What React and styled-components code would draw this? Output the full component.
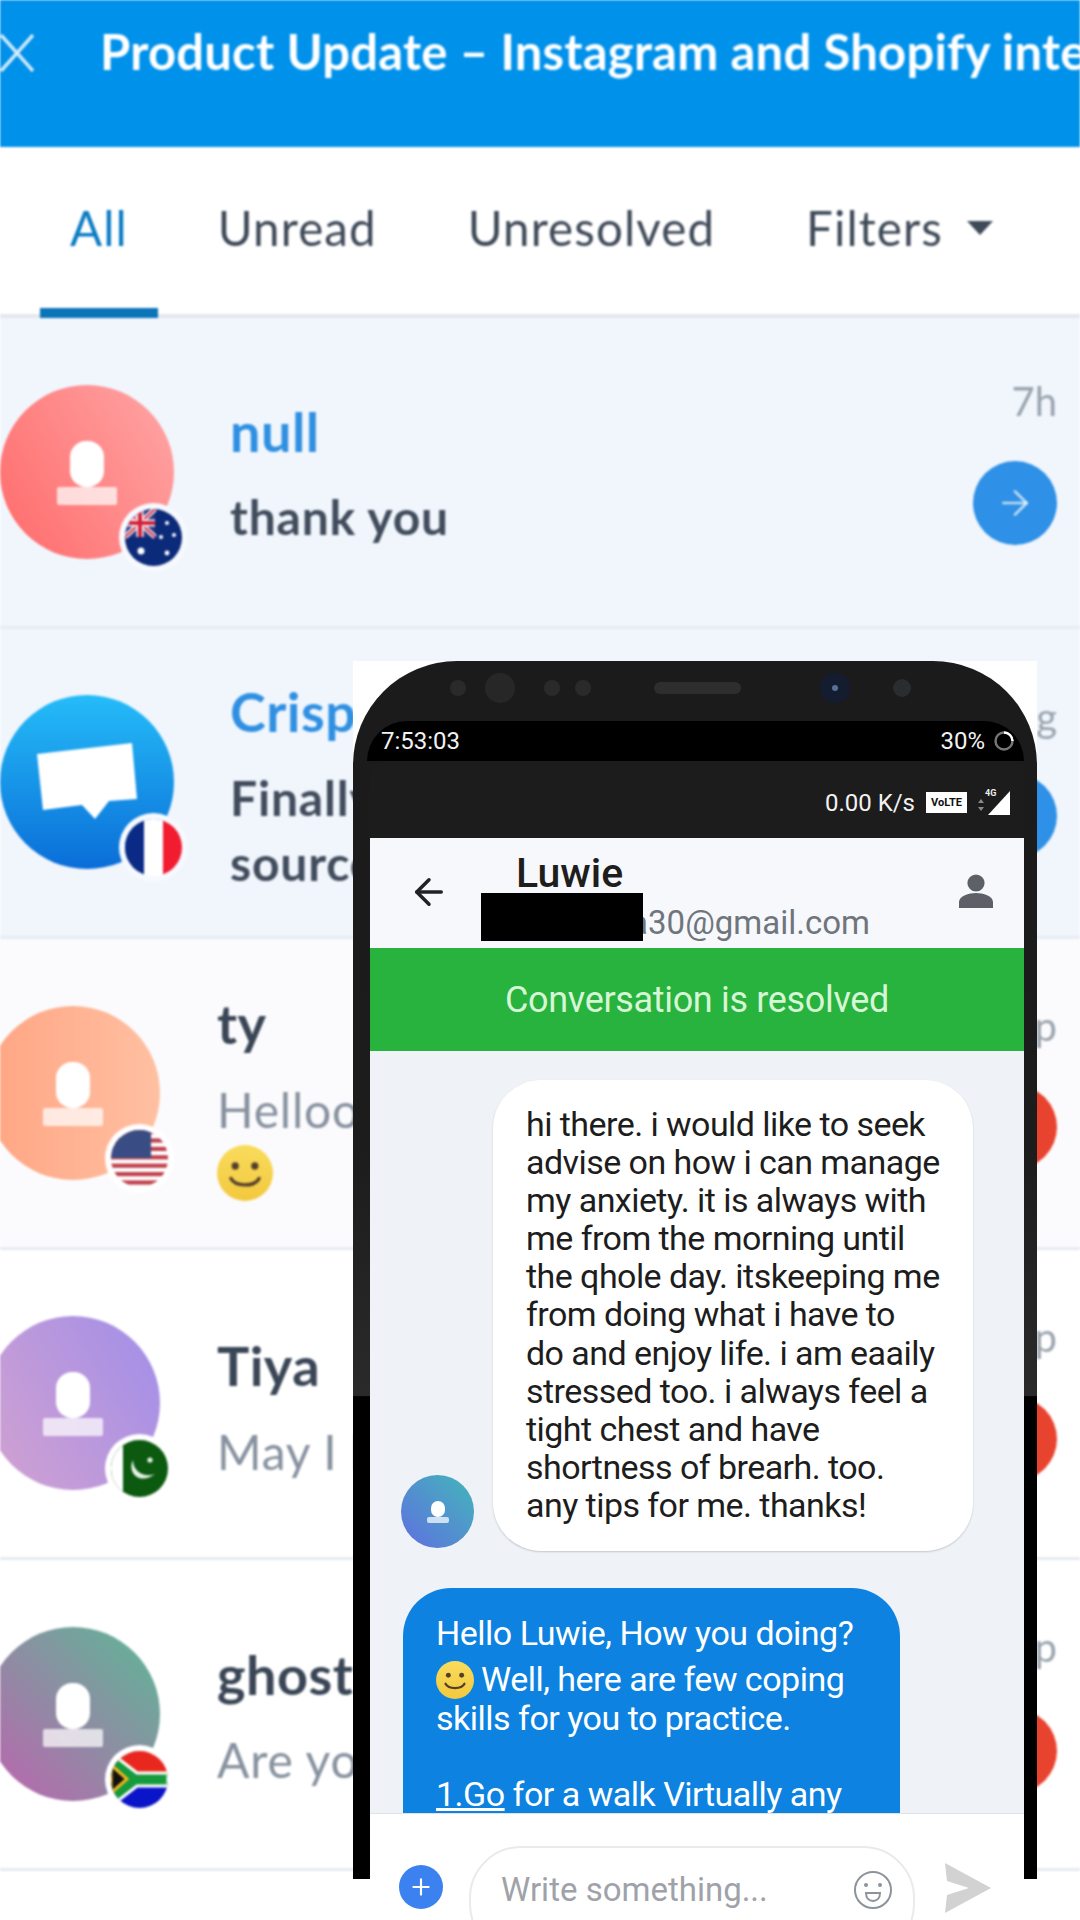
import styled, { createGlobalStyle } from "styled-components";
import { ArrowLeft, ArrowRight, Plus } from "lucide-react";

const Global = createGlobalStyle`
  html, body { margin: 0; padding: 0; background: #fff; }
  #root { width: 1080px; height: 1920px; overflow: hidden; position: relative; }
`;

const Page = styled.div`
  position: relative;
  width: 1080px;
  height: 1920px;
  overflow: hidden;
  background: #fff;
`;

const Inbox = styled.div`
  display: flex;
  flex-direction: column;
  font-family: Lato, "Open Sans", sans-serif;
  filter: blur(0.9px);
`;

const Banner = styled.div`
  height: 147px;
  flex: none;
  background: #0091ea;
  display: flex;
  align-items: flex-start;
  gap: 66px;
  padding-top: 24px;
  box-sizing: border-box;
  overflow: hidden;
  svg { flex: none; margin-top: 10px; }
`;

const BannerTitle = styled.div`
  color: #fff;
  font-size: 49px;
  line-height: 54px;
  font-weight: 700;
  letter-spacing: 0.2px;
  white-space: nowrap;
`;

const Tabs = styled.div`
  height: 167px;
  flex: none;
  display: flex;
  gap: 29px;
  padding-left: 40px;
  background: #fff;
  border-bottom: 4px solid #e4e7ec;
`;

const Tab = styled.div`
  height: 171px;
  box-sizing: border-box;
  padding: 0 ${(p) => (p.$active ? 30 : 31)}px;
  display: flex;
  align-items: center;
  gap: 24px;
  font-size: 47.5px;
  letter-spacing: 1.1px;
  color: ${(p) => (p.$active ? "#0b7cc4" : "#3f4a58")};
  border-bottom: 10px solid ${(p) => (p.$active ? "#0a74b8" : "transparent")};
`;

const Caret = styled.span`
  width: 0;
  height: 0;
  border-left: 13px solid transparent;
  border-right: 13px solid transparent;
  border-top: 14px solid #3f4a58;
`;

const Row = styled.div`
  height: 310.5px;
  flex: none;
  box-sizing: border-box;
  display: flex;
  align-items: center;
  background: ${(p) => p.$bg};
  border-bottom: 3px solid #e6ebf2;
  overflow: hidden;
`;

const Avatar = styled.div`
  position: relative;
  flex: none;
  width: 174px;
  height: 174px;
  margin-left: ${(p) => (p.$unread ? "-14px" : "0")};
  margin-right: ${(p) => (p.$unread ? "57px" : "56px")};
  border-radius: 50%;
  background: ${(p) => p.$bg};
  display: flex;
  flex-direction: column;
  align-items: center;
  padding-top: 56px;
  box-sizing: border-box;
`;

const Head = styled.div`
  width: ${(p) => (p.$small ? 14 : 34)}px;
  height: ${(p) => (p.$small ? 16 : 46)}px;
  border-radius: ${(p) => (p.$small ? 7 : 16)}px;
  background: #fff;
`;

const Shoulders = styled.div`
  width: ${(p) => (p.$small ? 22 : 60)}px;
  height: ${(p) => (p.$small ? 6 : 18)}px;
  border-radius: 2px;
  background: rgba(255, 255, 255, 0.72);
`;

const BubbleMark = styled.svg`
  margin-top: -8px;
`;

const Flag = styled.div`
  position: absolute;
  left: 125px;
  top: 124px;
  width: 57px;
  height: 57px;
  border-radius: 50%;
  overflow: hidden;
  box-shadow: 0 0 0 6px ${(p) => p.$ring};
  svg { display: block; }
`;

const Body = styled.div`
  flex: 1;
  min-width: 0;
  margin-top: ${(p) => p.$shift}px;
  display: flex;
  flex-direction: column;
  gap: 24.5px;
`;

const Name = styled.div`
  font-size: 54px;
  line-height: 56px;
  font-weight: 700;
  letter-spacing: 0.5px;
  color: ${(p) => (p.$blue ? "#2f90e2" : "#3a4656")};
`;

const Preview = styled.div`
  font-size: 48px;
  line-height: 65px;
  letter-spacing: 0.8px;
  font-weight: ${(p) => (p.$strong ? 700 : 400)};
  color: ${(p) => (p.$strong ? "#414c5c" : "#87919f")};
  white-space: nowrap;
`;

const EmojiLine = styled.div`
  height: 56px;
  margin-top: 3.5px;
  svg { display: block; }
`;

const Side = styled.div`
  flex: none;
  align-self: flex-start;
  width: 150px;
  margin-right: 23px;
  padding-top: ${(p) => p.$top}px;
  display: flex;
  flex-direction: column;
  align-items: flex-end;
  gap: ${(p) => p.$gap}px;
`;

const Time = styled.div`
  font-size: 40px;
  line-height: 44px;
  color: #9aa3ae;
`;

const Dot = styled.div`
  width: 84px;
  height: 84px;
  border-radius: 50%;
  background: ${(p) => p.$bg};
  display: flex;
  align-items: center;
  justify-content: center;
  color: rgba(255, 255, 255, 0.7);
`;

const Phone = styled.div`
  position: absolute;
  left: 353px;
  top: 661px;
  width: 684px;
  height: 1218px;
  background: #fff;
  font-family: Roboto, sans-serif;
`;

const Bezel = styled.div`
  position: relative;
  height: 100%;
  box-sizing: border-box;
  border-radius: 104px 104px 0 0 / 104px 104px 0 0;
  background: linear-gradient(180deg, #1b1b1b 0, #1c1c1c 40%, #2a2a2a 60.3%, #000 60.4%);
  padding: 60px 13px 0 17px;
`;

const Sensors = styled.div`
  position: absolute;
  left: 0;
  right: 0;
  top: 0;
  height: 60px;
  svg { display: block; }
`;

const Screen = styled.div`
  height: 1199px;
  display: flex;
  flex-direction: column;
`;

const StatusBar = styled.div`
  height: 40px;
  flex: none;
  background: #000;
  border-radius: 40px 40px 0 0;
  margin-left: -3px;
  padding: 0 9px 0 14px;
  display: flex;
  align-items: center;
  justify-content: space-between;
  color: #f2f2f2;
  font-size: 24px;
`;

const StatusRight = styled.div`
  display: flex;
  align-items: center;
  gap: 8px;
`;

const Notch = styled.div`
  height: 77px;
  flex: none;
  background: #1c1c1c;
  border-radius: 14px 14px 0 0;
  display: flex;
  align-items: center;
  justify-content: flex-end;
  gap: 11px;
  padding: 6px 14px 0 0;
  box-sizing: border-box;
  color: #f2f2f2;
  font-size: 24px;
`;

const Volte = styled.span`
  width: 41px;
  height: 21px;
  background: #fff;
  color: #111;
  font-size: 11px;
  font-weight: 700;
  display: flex;
  align-items: center;
  justify-content: center;
`;

const Signal = styled.div`
  position: relative;
  width: 32px;
  height: 24px;
  svg { position: absolute; right: 0; top: 0; }
  svg + svg { right: auto; left: 0; top: 8px; }
  span {
    position: absolute;
    left: 7px;
    top: -3px;
    font-size: 9px;
    font-weight: 700;
    color: #eee;
  }
`;

const AppBar = styled.div`
  height: 110px;
  flex: none;
  background: #f6f8fc;
  display: flex;
  align-items: flex-start;
  padding-left: 38px;
  padding-right: 30px;
  box-sizing: border-box;
`;

const BackBtn = styled.div`
  flex: none;
  width: 42px;
  margin-top: 33px;
  color: #222;
`;

const Who = styled.div`
  flex: 1;
  margin-left: 28px;
  display: flex;
  flex-direction: column;
`;

const WhoName = styled.div`
  margin-left: 38px;
  margin-top: 10px;
  font-size: 41px;
  line-height: 50px;
  font-weight: 500;
  color: #1e1e1e;
`;

const Email = styled.div`
  position: relative;
  width: 392px;
  margin-top: 2px;
  text-align: right;
  font-size: 33px;
  line-height: 46px;
  color: #70757c;
`;

const Redact = styled.div`
  position: absolute;
  left: 3px;
  top: -7px;
  width: 162px;
  height: 48px;
  background: #000;
`;

const PersonIcon = styled.div`
  flex: none;
  margin-top: 36px;
`;

const Resolved = styled.div`
  height: 103px;
  flex: none;
  background: #28b23e;
  color: #d6f6d6;
  font-size: 36px;
  letter-spacing: -0.33px;
  display: flex;
  align-items: center;
  justify-content: center;
`;

const Chat = styled.div`
  height: 763px;
  flex: none;
  overflow: hidden;
  background: #eff2f6;
  padding-top: 29px;
  box-sizing: border-box;
  border-bottom: 1px solid #dfe3e8;
`;

const IncomingRow = styled.div`
  display: flex;
  align-items: flex-end;
  gap: 19px;
  padding-left: 31px;
`;

const SmallAvatar = styled.div`
  flex: none;
  width: 73px;
  height: 73px;
  margin-bottom: 3px;
  border-radius: 50%;
  background: linear-gradient(45deg, #5f6fe0, #43b6bb);
  display: flex;
  flex-direction: column;
  align-items: center;
  justify-content: center;
`;

const Incoming = styled.div`
  width: 480px;
  box-sizing: border-box;
  padding: 25px 20px 27px 33px;
  border-radius: 48px;
  background: #fff;
  box-shadow: 0 1px 2px rgba(0, 0, 0, 0.18);
  color: #1d1d1d;
  font-size: 34px;
  letter-spacing: -0.55px;
  line-height: 38.1px;
  white-space: nowrap;
`;

const Outgoing = styled.div`
  width: 497px;
  margin: 37px 0 0 33px;
  box-sizing: border-box;
  padding: 26px 20px 60px 33px;
  border-radius: 48px;
  background: #0d82e0;
  color: #fff;
  font-size: 34px;
  letter-spacing: -0.5px;
  line-height: 38px;
  white-space: nowrap;
  a { color: inherit; text-decoration: underline; }
  svg { vertical-align: -8px; margin: 9px 7px 0 0; }
`;

const Composer = styled.div`
  flex: 1;
  background: #fff;
  display: flex;
  align-items: flex-start;
  padding-left: 29px;
`;

const AddBtn = styled.div`
  flex: none;
  width: 44px;
  height: 44px;
  margin-top: 51px;
  border-radius: 50%;
  background: #3b82f0;
  color: #fff;
  display: flex;
  align-items: center;
  justify-content: center;
`;

const Input = styled.div`
  flex: none;
  width: 446px;
  height: 110px;
  margin: 32px 0 0 26px;
  box-sizing: border-box;
  padding: 20px 20px 0 30px;
  border: 2px solid #e9eaec;
  border-radius: 52px;
  display: flex;
  justify-content: space-between;
  color: #a0a2a9;
  font-size: 33px;
  line-height: 44px;
`;

const SmileFace = styled.svg`
  margin-top: 2px;
`;

const Send = styled.div`
  margin: 49px 0 0 30px;
`;

const Person = ({ small }) => (
  <>
    <Head $small={small} />
    <Shoulders $small={small} />
  </>
);

const Smile = ({ size, id }) => (
  <svg width={size} height={size} viewBox="0 0 40 40">
    <defs>
      <linearGradient id={id} x1="0" y1="0" x2="0" y2="1">
        <stop offset="0" stopColor="#f9dc5c" />
        <stop offset="1" stopColor="#f3c83e" />
      </linearGradient>
    </defs>
    <circle cx="20" cy="20" r="20" fill={`url(#${id})`} />
    <circle cx="13" cy="15" r="2.6" fill="#54402a" />
    <circle cx="27" cy="15" r="2.6" fill="#54402a" />
    <path d="M10 24c3 6 17 6 20 0" fill="none" stroke="#54402a" strokeWidth="2.4" strokeLinecap="round" />
  </svg>
);

const FlagAU = () => (
  <svg width="57" height="57" viewBox="0 0 57 57">
    <rect width="57" height="57" fill="#0c2a7a" />
    <rect width="30" height="28" fill="#27357f" />
    <path d="M0 0l30 28M30 0L0 28" stroke="#fff" strokeWidth="5" />
    <path d="M0 0l30 28M30 0L0 28" stroke="#d2213a" strokeWidth="2" />
    <path d="M15 0v28M0 14h30" stroke="#fff" strokeWidth="7" />
    <path d="M15 0v28M0 14h30" stroke="#d2213a" strokeWidth="4" />
    <circle cx="16" cy="42" r="3.5" fill="#fff" />
    <circle cx="42" cy="14" r="2" fill="#fff" />
    <circle cx="49" cy="26" r="2" fill="#fff" />
    <circle cx="36" cy="28" r="2" fill="#fff" />
    <circle cx="42" cy="44" r="2.4" fill="#fff" />
  </svg>
);

const FlagFR = () => (
  <svg width="57" height="57" viewBox="0 0 57 57">
    <rect width="19" height="57" fill="#0a2a86" />
    <rect x="19" width="19" height="57" fill="#fff" />
    <rect x="38" width="19" height="57" fill="#f11c30" />
  </svg>
);

const FlagUS = () => (
  <svg width="57" height="57" viewBox="0 0 57 57">
    <rect width="57" height="57" fill="#fff" />
    {[0, 1, 2, 3, 4, 5, 6].map((i) => (
      <rect key={i} y={i * 8.4} width="57" height="4.2" fill="#c0404c" />
    ))}
    <rect width="40" height="28" fill="#3a4c84" />
  </svg>
);

const FlagPK = () => (
  <svg width="57" height="57" viewBox="0 0 57 57">
    <rect width="57" height="57" fill="#0b5a10" />
    <rect width="12" height="57" fill="#fff" />
    <path d="M22 20c-6 12 6 26 22 14-10 4-22-2-22-14z" fill="#e8f2e8" />
    <circle cx="39" cy="20" r="2.6" fill="#e8f2e8" />
  </svg>
);

const FlagZA = () => (
  <svg width="57" height="57" viewBox="0 0 57 57">
    <rect width="57" height="28" fill="#e8281e" />
    <rect y="28" width="57" height="29" fill="#0a14c8" />
    <path d="M0 4l24 24L0 52z" fill="#111" />
    <path d="M0 2l26 20h31v13H26L0 55" fill="#159a3c" stroke="#fff" strokeWidth="3" />
    <path d="M0 14l16 14L0 42z" fill="#111" stroke="#f4b81c" strokeWidth="3" />
  </svg>
);

const rows = [
  {
    name: "null",
    blue: true,
    strong: true,
    bg: "#f1f6fd",
    ring: "#f6f9fe",
    avatar: "linear-gradient(60deg, #ff6a6a, #ffa6a6)",
    flag: <FlagAU />,
    text: "thank you",
    time: "7h",
    dot: "#2e90e6",
    shift: 9,
    side: [61, 38],
  },
  {
    name: "Crisp",
    blue: true,
    strong: true,
    bg: "#f1f6fd",
    ring: "#f6f9fe",
    avatar: "linear-gradient(180deg, #25bcf8, #0a6ed8)",
    flag: <FlagFR />,
    text: (
      <>
        Finally
        <br />
        source
      </>
    ),
    time: "Aug",
    dot: "#2e90e6",
    shift: 14,
    side: [66, 35],
  },
  {
    name: "ty",
    bg: "#fbfbfd",
    ring: "#fff",
    unread: true,
    avatar: "linear-gradient(90deg, #ffa583, #ffc0a2)",
    flag: <FlagUS />,
    text: "Helloo",
    emoji: true,
    time: "Sep",
    dot: "#e8432e",
    shift: 12,
    side: [65, 37],
  },
  {
    name: "Tiya",
    bg: "#fff",
    ring: "#fff",
    unread: true,
    avatar: "linear-gradient(60deg, #d3a2d0, #a18ee9)",
    flag: <FlagPK />,
    text: "May I know",
    time: "Sep",
    dot: "#e8432e",
    shift: 15,
    side: [65, 38],
  },
  {
    name: "ghost",
    bg: "#fff",
    ring: "#fff",
    unread: true,
    avatar: "linear-gradient(45deg, #bf62b0, #5cb896)",
    flag: <FlagZA />,
    text: "Are you",
    time: "Sep",
    dot: "#e8432e",
    shift: 11,
    side: [65, 40],
  },
];

export default function App() {
  return (
    <Page>
      <Global />
      <Inbox>
        <Banner>
          <svg width="34" height="38" viewBox="0 0 34 38">
            <path d="M1 1l32 36M33 1L1 37" stroke="#d5ecfb" strokeWidth="3.4" fill="none" />
          </svg>
          <BannerTitle>Product Update – Instagram and Shopify integration</BannerTitle>
        </Banner>
        <Tabs>
          <Tab $active>All</Tab>
          <Tab>Unread</Tab>
          <Tab>Unresolved</Tab>
          <Tab>
            Filters
            <Caret />
          </Tab>
        </Tabs>
        {rows.map((r, i) => (
          <Row key={r.name} $bg={r.bg}>
            <Avatar $bg={r.avatar} $unread={r.unread}>
              {i === 1 ? (
                <BubbleMark width="100" height="78" viewBox="0 0 100 78">
                  <path d="M0 11L95 0l5 56-28 2-14 18-13-14-39 5z" fill="#fff" />
                </BubbleMark>
              ) : (
                <Person />
              )}
              <Flag $ring={r.ring}>{r.flag}</Flag>
            </Avatar>
            <Body $shift={r.shift}>
              <Name $blue={r.blue}>{r.name}</Name>
              <div>
                <Preview $strong={r.strong}>{r.text}</Preview>
                {r.emoji && (
                  <EmojiLine>
                    <Smile size={56} id="smile-row" />
                  </EmojiLine>
                )}
              </div>
            </Body>
            <Side $top={r.side[0]} $gap={r.side[1]}>
              <Time>{r.time}</Time>
              <Dot $bg={r.dot}>
                {r.blue && <ArrowRight size={40} strokeWidth={1.6} />}
              </Dot>
            </Side>
          </Row>
        ))}
      </Inbox>

      <Phone>
        <Bezel>
          <Sensors>
            <svg width="684" height="60" viewBox="0 0 684 60">
              <circle cx="105" cy="27" r="8" fill="#2a2a2a" />
              <circle cx="147" cy="27" r="15" fill="#272727" />
              <circle cx="199" cy="27" r="8" fill="#2a2a2a" />
              <circle cx="230" cy="27" r="8" fill="#2a2a2a" />
              <rect x="301" y="21" width="87" height="12" rx="6" fill="#2e2e2e" />
              <circle cx="482" cy="27" r="15" fill="#141c30" />
              <circle cx="482" cy="27" r="3" fill="#5a6e96" />
              <circle cx="549" cy="27" r="9" fill="#2a2c30" />
            </svg>
          </Sensors>
          <Screen>
            <StatusBar>
              <span>7:53:03</span>
              <StatusRight>
                <span>30%</span>
                <svg width="22" height="22" viewBox="0 0 22 22">
                  <circle cx="11" cy="11" r="8.5" fill="none" stroke="#777" strokeWidth="2.4" />
                  <path d="M11 2.5a8.5 8.5 0 0 1 8.5 8.5" fill="none" stroke="#fff" strokeWidth="2.4" />
                </svg>
              </StatusRight>
            </StatusBar>
            <Notch>
              <span>0.00 K/s</span>
              <Volte>VoLTE</Volte>
              <Signal>
                <span>4G</span>
                <svg width="22" height="24" viewBox="0 0 22 24">
                  <path d="M22 0v24H0z" fill="#fff" />
                </svg>
                <svg width="6" height="12" viewBox="0 0 6 12">
                  <path d="M3 0l3 4H0zM3 12L0 8h6z" fill="#8a8a8a" />
                </svg>
              </Signal>
            </Notch>
            <AppBar>
              <BackBtn>
                <ArrowLeft size={42} strokeWidth={2} />
              </BackBtn>
              <Who>
                <WhoName>Luwie</WhoName>
                <Email>
                  a30@gmail.com
                  <Redact />
                </Email>
              </Who>
              <PersonIcon>
                <svg width="36" height="34" viewBox="0 0 36 34">
                  <circle cx="18" cy="9" r="8.6" fill="#5d6167" />
                  <path d="M1 34v-6c0-6 10-9 17-9s17 3 17 9v6z" fill="#5d6167" />
                </svg>
              </PersonIcon>
            </AppBar>
            <Resolved>Conversation is resolved</Resolved>
            <Chat>
              <IncomingRow>
                <SmallAvatar>
                  <Person small />
                </SmallAvatar>
                <Incoming>
                  hi there. i would like to seek
                  <br />
                  advise on how i can manage
                  <br />
                  my anxiety. it is always with
                  <br />
                  me from the morning until
                  <br />
                  the qhole day. itskeeping me
                  <br />
                  from doing what i have to
                  <br />
                  do and enjoy life. i am eaaily
                  <br />
                  stressed too. i always feel a
                  <br />
                  tight chest and have
                  <br />
                  shortness of brearh. too.
                  <br />
                  any tips for me. thanks!
                </Incoming>
              </IncomingRow>
              <Outgoing>
                Hello Luwie, How you doing?
                <br />
                <Smile size={38} id="smile-chat" />
                Well, here are few coping
                <br />
                skills for you to practice.
                <br />
                <br />
                <a>1.Go</a> for a walk Virtually any
              </Outgoing>
            </Chat>
            <Composer>
              <AddBtn>
                <Plus size={26} strokeWidth={2} />
              </AddBtn>
              <Input>
                <span>Write something...</span>
                <SmileFace width="40" height="40" viewBox="0 0 40 40">
                  <circle cx="20" cy="20" r="18" fill="none" stroke="#8d939b" strokeWidth="2" />
                  <circle cx="13" cy="15" r="2" fill="#8d939b" />
                  <circle cx="27" cy="15" r="2" fill="#8d939b" />
                  <path d="M13 23h14c0 5-3 8-7 8s-7-3-7-8z" fill="none" stroke="#8d939b" strokeWidth="2" />
                </SmileFace>
              </Input>
              <Send>
                <svg width="46" height="50" viewBox="0 0 46 50">
                  <path d="M0 0l46 25L0 50l2-18 22-7-22-7z" fill="#d2d2d2" />
                </svg>
              </Send>
            </Composer>
          </Screen>
        </Bezel>
      </Phone>
    </Page>
  );
}
